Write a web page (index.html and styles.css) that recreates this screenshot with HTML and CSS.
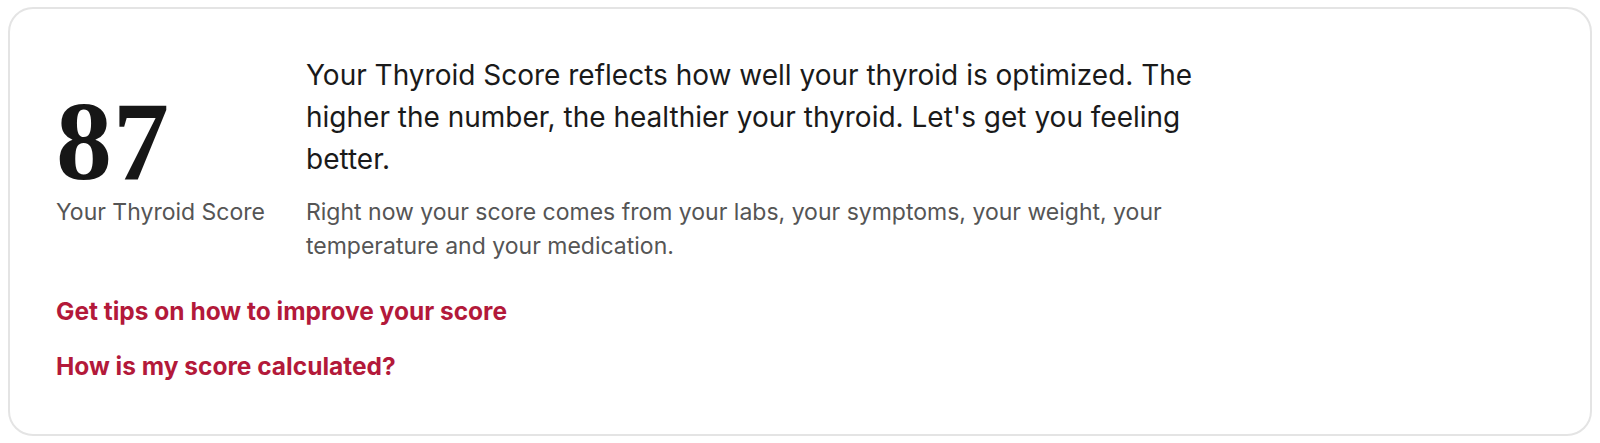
FILE: index.html
```html
<!DOCTYPE html>
<html lang="en">
<head>
    <meta charset="UTF-8">
    <title>Thyroid Score</title>
    <link rel="stylesheet" href="styles.css">
</head>
<body>
    <div class="score-card">
        <div class="score-top">
            <div class="score-value">
                <div class="score-number">87</div>
                <div class="score-label">Your Thyroid Score</div>
            </div>
            <div class="score-text">
                <p class="score-lead">Your Thyroid Score reflects how well your thyroid is optimized. The higher the number, the healthier your thyroid. Let's get you feeling better.</p>
                <p class="score-note">Right now your score comes from your labs, your symptoms, your weight, your temperature and your medication.</p>
            </div>
        </div>
        <div class="score-links">
            <a href="#" class="score-link">Get tips on how to improve your score</a>
            <a href="#" class="score-link">How is my score calculated?</a>
        </div>
    </div>
</body>
</html>
```

FILE: styles.css
```css
body {
    margin: 0;
    padding: 7px 8px;
    background: #fff;
    font-family: 'Inter', 'Liberation Sans', sans-serif;
}

.score-card {
    border: 2px solid #e4e4e4;
    border-radius: 25px;
    padding: 45px 45px 40px 46px;
    height: 429px;
    box-sizing: border-box;
}

.score-top {
    display: flex;
    align-items: flex-start;
}

.score-value {
    width: 250px;
    flex-shrink: 0;
    margin-top: 31px;
}

.score-number {
    font-family: 'Liberation Serif', 'DejaVu Serif', serif;
    font-weight: bold;
    font-size: 112px;
    line-height: 112px;
    letter-spacing: 1px;
    color: #161616;
}

.score-label {
    font-size: 23px;
    line-height: 34px;
    color: #555;
    margin-top: -2px;
}

.score-text {
    max-width: 910px;
}

.score-lead {
    margin: 0;
    font-size: 28px;
    line-height: 42px;
    color: #1a1a1a;
}

.score-note {
    margin: 15px 0 0 0;
    font-size: 23px;
    line-height: 34px;
    color: #555;
}

.score-links {
    display: flex;
    flex-direction: column;
    align-items: flex-start;
    gap: 26px;
    margin-top: 34px;
}

.score-link {
    font-size: 24.5px;
    line-height: 29px;
    font-weight: 700;
    color: #b3193a;
    text-decoration: none;
}
```
